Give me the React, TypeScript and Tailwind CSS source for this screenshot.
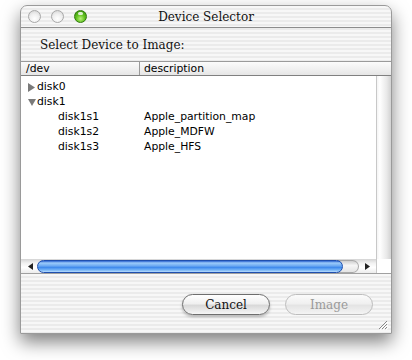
import React from "react";

const stripes =
  "bg-[repeating-linear-gradient(to_bottom,#f7f7f7_0px,#f7f7f7_2px,#ebebeb_2px,#ebebeb_4px)]";

function Light({ green }: { green?: boolean }) {
  return green ? (
    <div className="w-[13px] h-[13px] rounded-full border border-[#2f7a0c] bg-[radial-gradient(circle_at_50%_70%,#b8f07a_0%,#62c21f_45%,#2f8a0a_100%)] relative">
      <div className="absolute left-[3px] top-[1px] w-[5px] h-[3px] rounded-full bg-white/80" />
    </div>
  ) : (
    <div className="w-[13px] h-[13px] rounded-full border border-[#a8a8a8] bg-[radial-gradient(circle_at_50%_70%,#ffffff_0%,#efefef_50%,#cfcfcf_100%)]" />
  );
}

const rows = [
  { name: "disk0", tri: "right", indent: 0, desc: "" },
  { name: "disk1", tri: "down", indent: 0, desc: "" },
  { name: "disk1s1", tri: "", indent: 1, desc: "Apple_partition_map" },
  { name: "disk1s2", tri: "", indent: 1, desc: "Apple_MDFW" },
  { name: "disk1s3", tri: "", indent: 1, desc: "Apple_HFS" },
];

export default function App() {
  const serif = "font-['DejaVu_Serif',serif]";
  const sans = "font-['DejaVu_Sans',sans-serif]";
  return (
    <div className="w-[412px] h-[360px] bg-white overflow-hidden pt-[5px] pl-[20px]">
      <div
        className={`w-[372px] h-[329px] flex flex-col rounded-t-[7px] shadow-[0_8px_18px_rgba(0,0,0,0.5)] border border-[#9a9a9a] relative ${stripes}`}
      >
        {/* title bar */}
        <div className="h-[22px] relative flex items-center pl-[7px] gap-[10px] border-b border-[#8d8d8d] rounded-t-[7px]">
          <Light />
          <Light />
          <Light green />
          <div
            className={`absolute inset-0 flex items-center justify-center text-[12px] text-[#111] ${serif}`}
          >
            Device Selector
          </div>
        </div>
        {/* label */}
        <div
          className={`h-[33px] flex items-center pl-[19px] text-[12px] text-[#111] ${serif}`}
        >
          Select Device to Image:
        </div>
        {/* list header */}
        <div
          className={`h-[15px] flex border-t border-[#9a9a9a] border-b border-b-[#808080] bg-[linear-gradient(to_bottom,#fbfbfb,#e6e6e6)] text-[10.8px] text-black ${sans}`}
        >
          <div className="w-[119px] border-r border-[#9a9a9a] pl-[5px] leading-[13px]">
            /dev
          </div>
          <div className="flex-1 pl-[4px] leading-[13px]">description</div>
        </div>
        {/* body */}
        <div className="h-[183px] flex">
          <div className={`flex-1 bg-white pt-[4px] text-[10.8px] text-black ${sans}`}>
            {rows.map((r) => (
              <div key={r.name} className="h-[15px] flex items-center">
                <div className="w-[119px] flex items-center">
                  {r.indent === 0 ? (
                    <>
                      <div className="w-[16px] pl-[7px] flex items-center">
                        {r.tri === "right" ? (
                          <svg width="7" height="9" viewBox="0 0 7 9">
                            <path d="M0 0 L7 4.5 L0 9 Z" fill="#7a7a7a" />
                          </svg>
                        ) : (
                          <svg width="8" height="7" viewBox="0 0 8 7">
                            <path d="M0 0 L8 0 L4 7 Z" fill="#7a7a7a" />
                          </svg>
                        )}
                      </div>
                      <span>{r.name}</span>
                    </>
                  ) : (
                    <span className="pl-[37px]">{r.name}</span>
                  )}
                </div>
                <span className="pl-[4px]">{r.desc}</span>
              </div>
            ))}
          </div>
          <div className="w-[15px] bg-[linear-gradient(to_right,#f4f4f4,#ffffff_20%,#e8e8e8_70%,#d2d2d2)] border-l border-[#c8c8c8]" />
        </div>
        {/* horizontal scrollbar */}
        <div className="h-[15px] flex border-b border-[#a0a0a0]">
          <div className="flex-1 flex items-center bg-[linear-gradient(to_bottom,#d4d4d4,#f2f2f2_30%,#ffffff_60%,#ececec)]">
            <div className="w-[16px] shrink-0 flex items-center justify-center pl-[2px]">
              <svg width="5" height="7" viewBox="0 0 5 7">
                <path d="M5 0 L0 3.5 L5 7 Z" fill="#222" />
              </svg>
            </div>
            <div className="w-[306px] shrink-0 h-[13px] rounded-full border border-[#1f4fae] bg-[linear-gradient(to_bottom,#2a62cf_0%,#9ccbfa_18%,#6aa8f2_45%,#3f89ec_58%,#6fb0f5_80%,#b8dcfd_100%)] relative z-10" />
            <div className="w-[22px] shrink-0 h-[13px] -ml-[6px] rounded-r-full border border-l-0 border-[#a8a8a8] bg-[linear-gradient(to_bottom,#cfcfcf,#f6f6f6_40%,#e4e4e4)]" />
            <div className="flex-1 flex items-center justify-center">
              <svg width="5" height="7" viewBox="0 0 5 7">
                <path d="M0 0 L5 3.5 L0 7 Z" fill="#222" />
              </svg>
            </div>
          </div>
          <div className="w-[15px] bg-white border-l border-[#c8c8c8]" />
        </div>
        {/* bottom */}
        <div className="flex-1 flex justify-end items-start pt-[20px] pr-[18px] gap-[15px] relative">
          <div
            className={`w-[88px] h-[21px] rounded-full border border-[#6e6e6e] bg-[linear-gradient(to_bottom,#ffffff,#f0f0f0_45%,#d9d9d9_55%,#f6f6f6)] shadow-[0_2px_3px_rgba(0,0,0,0.25)] flex items-center justify-center text-[12px] text-[#111] ${serif}`}
          >
            Cancel
          </div>
          <div
            className={`w-[88px] h-[21px] rounded-full border border-[#bdbdbd] bg-[linear-gradient(to_bottom,#fbfbfb,#f0f0f0_45%,#e4e4e4_55%,#f4f4f4)] flex items-center justify-center text-[12px] text-[#9a9a9a] ${serif}`}
          >
            Image
          </div>
          <svg
            className="absolute right-[3px] bottom-[3px]"
            width="11"
            height="11"
            viewBox="0 0 11 11"
          >
            <path d="M10 2 L2 10 M10 5 L5 10 M10 8 L8 10" stroke="#888" strokeWidth="1" />
            <path d="M11 3 L3 11 M11 6 L6 11 M11 9 L9 11" stroke="#fff" strokeWidth="1" />
          </svg>
        </div>
      </div>
    </div>
  );
}
